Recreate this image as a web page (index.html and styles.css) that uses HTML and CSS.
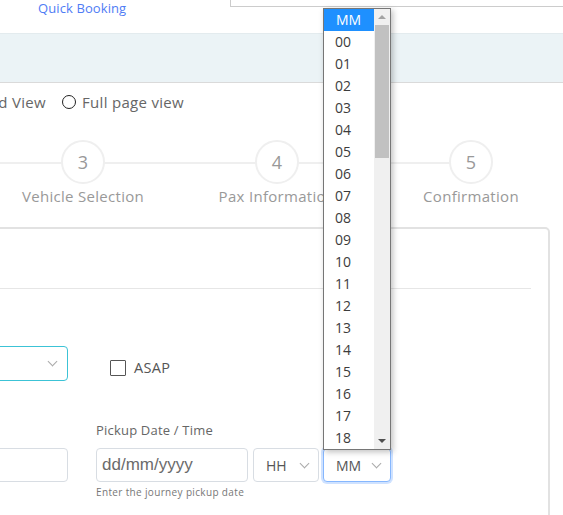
FILE: index.html
```html
<!DOCTYPE html>
<html lang="en">
<head>
  <meta charset="UTF-8" />
  <meta name="viewport" content="width=device-width, initial-scale=1.0"/>
  <title>Quick Booking</title>
  <link rel="stylesheet" href="styles.css">
</head>
<body>

  <!-- Top bar -->
  <div class="top-bar">
    <a href="#" class="quick-link">Quick Booking</a>
    <div class="search-box"></div>
  </div>

  <!-- Info band -->
  <div class="band"></div>

  <!-- View switch -->
  <div class="view-row">
    <label class="view-option first">Standard View</label>
    <label class="view-option"><span class="radio"></span>Full page view</label>
  </div>

  <!-- Steps -->
  <div class="stepper">
    <div class="step"><div class="step-circle">1</div><div class="step-label">Journey Details</div></div>
    <div class="step"><div class="step-circle">2</div><div class="step-label">Extras</div></div>
    <div class="step"><div class="step-circle">3</div><div class="step-label">Vehicle Selection</div></div>
    <div class="step"><div class="step-circle">4</div><div class="step-label">Pax Information</div></div>
    <div class="step"><div class="step-circle">5</div><div class="step-label">Confirmation</div></div>
  </div>

  <!-- Booking card -->
  <div class="card">
    <div class="card-header"></div>

    <div class="form-row first-row">
      <div class="col-left">
        <div class="select teal"><span></span><i class="chev"></i></div>
      </div>
      <div class="col-right">
        <label class="check"><span class="box"></span>ASAP</label>
      </div>
    </div>

    <div class="form-row second-row">
      <div class="col-left">
        <div class="field-label">&nbsp;</div>
        <div class="input"></div>
      </div>
      <div class="col-right">
        <div class="field-label">Pickup Date / Time</div>
        <div class="date-time">
          <div class="input date">dd/mm/yyyy</div>
          <div class="select hh"><span>HH</span><i class="chev"></i></div>
          <div class="select mm focus"><span>MM</span><i class="chev"></i></div>
        </div>
        <div class="help">Enter the journey pickup date</div>
      </div>
    </div>
  </div>

  <!-- Open minutes dropdown -->
  <div class="dropdown">
    <div class="options">
      <div class="opt selected">MM</div>
      <div class="opt">00</div>
      <div class="opt">01</div>
      <div class="opt">02</div>
      <div class="opt">03</div>
      <div class="opt">04</div>
      <div class="opt">05</div>
      <div class="opt">06</div>
      <div class="opt">07</div>
      <div class="opt">08</div>
      <div class="opt">09</div>
      <div class="opt">10</div>
      <div class="opt">11</div>
      <div class="opt">12</div>
      <div class="opt">13</div>
      <div class="opt">14</div>
      <div class="opt">15</div>
      <div class="opt">16</div>
      <div class="opt">17</div>
      <div class="opt">18</div>
    </div>
    <div class="scrollbar">
      <span class="arrow up"></span>
      <div class="track"><div class="thumb"></div></div>
      <span class="arrow down"></span>
    </div>
  </div>

</body>
</html>
```

FILE: styles.css
```css
* {
  margin: 0;
  padding: 0;
  box-sizing: border-box;
  font-family: 'Open Sans', 'DejaVu Sans', sans-serif;
}

body {
  width: 563px;
  height: 515px;
  overflow: hidden;
  position: relative;
  background: white;
  color: #666;
}

/* Top bar */
.top-bar {
  display: flex;
  height: 33px;
}

.quick-link {
  margin-left: 38px;
  margin-top: -2px;
  font-size: 13px;
  line-height: 20px;
  letter-spacing: 0.1px;
  color: #4f7cf5;
  text-decoration: none;
}

.search-box {
  margin-left: auto;
  width: 333px;
  height: 7px;
  border-left: 1px solid #ccc;
  border-bottom: 1px solid #ccc;
}

.band {
  height: 50px;
  background: #ebf3f6;
  border-top: 1px solid #e3ebee;
  border-bottom: 1px solid #dadada;
}

/* View switch */
.view-row {
  display: flex;
  align-items: center;
  margin-top: 9px;
  height: 20px;
  font-size: 15px;
  letter-spacing: 0.3px;
  color: #666;
}

.view-option {
  display: flex;
  align-items: center;
  white-space: nowrap;
}

.view-option.first {
  width: 46px;
  justify-content: flex-end;
  margin-right: 16px;
}

.radio {
  width: 14px;
  height: 14px;
  border: 1.5px solid #222;
  border-radius: 50%;
  margin-right: 6px;
}

/* Stepper */
.stepper {
  display: flex;
  position: relative;
  margin-top: 28px;
  margin-left: -402px;
}

.stepper::before {
  content: '';
  position: absolute;
  top: 22px;
  left: 97px;
  right: 97px;
  height: 2px;
  background: #efefef;
}

.step {
  width: 194px;
  flex-shrink: 0;
  display: flex;
  flex-direction: column;
  align-items: center;
  position: relative;
}

.step-circle {
  width: 44px;
  height: 44px;
  border: 2px solid #efefef;
  border-radius: 50%;
  background: white;
  display: flex;
  align-items: center;
  justify-content: center;
  font-size: 18px;
  color: #999;
}

.step-label {
  margin-top: 2px;
  font-size: 15px;
  line-height: 20px;
  letter-spacing: 0.3px;
  color: #999;
  white-space: nowrap;
}

/* Card */
.card {
  margin-top: 21px;
  margin-left: -20px;
  width: 570px;
  height: 300px;
  border: 2px solid #e2e2e2;
  border-radius: 5px;
  padding-right: 17px;
}

.card-header {
  height: 60px;
  border-bottom: 1px solid #e6e6e6;
}

.form-row {
  display: flex;
  gap: 28px;
  margin-left: -100px;
}

.col-left {
  width: 186px;
  flex-shrink: 0;
}

.first-row {
  margin-top: 57px;
  align-items: flex-start;
}

.second-row {
  margin-top: 40px;
}

.select {
  height: 35px;
  border: 1px solid #d8dde3;
  border-radius: 4px;
  display: flex;
  align-items: center;
  justify-content: space-between;
  padding: 0 10px 0 12px;
  font-size: 14px;
  color: #555;
  background: white;
}

.select.teal {
  border-color: #3cc3d6;
  padding-right: 11px;
}

.chev {
  width: 7px;
  height: 7px;
  border-right: 1px solid #aaa;
  border-bottom: 1px solid #aaa;
  transform: rotate(45deg);
  margin-top: -4px;
}

.check {
  display: flex;
  align-items: center;
  margin-top: 12px;
  margin-left: 14px;
  font-size: 14.5px;
  letter-spacing: 0.3px;
  color: #555;
}

.check .box {
  width: 16px;
  height: 16px;
  border: 1.5px solid #555;
  border-radius: 1px;
  margin-right: 8px;
}

.field-label {
  font-size: 13px;
  line-height: 18px;
  letter-spacing: 0.2px;
  color: #666;
  margin-bottom: 9px;
}

.input {
  height: 34px;
  border: 1px solid #d8dde3;
  border-radius: 4px;
  background: white;
}

.date-time {
  display: flex;
  gap: 5px;
}

.input.date {
  width: 152px;
  padding-left: 5px;
  font-family: 'Liberation Sans', Arial, sans-serif;
  font-size: 17px;
  line-height: 32px;
  color: #6b6b6b;
}

.select.hh {
  width: 66px;
  height: 34px;
}

.select.mm {
  width: 68px;
  height: 34px;
  margin-left: -1px;
}

.select.focus {
  border-color: #86b7fe;
  box-shadow: 0 0 0 2px rgba(13, 110, 253, 0.2);
}

.help {
  margin-top: 3px;
  font-size: 10px;
  letter-spacing: 0.35px;
  color: #777;
}

/* Dropdown list */
.dropdown {
  position: absolute;
  left: 323px;
  top: 8px;
  width: 68px;
  height: 442px;
  border: 1px solid #767676;
  background: white;
  display: flex;
  box-shadow: 2px 2px 6px rgba(0, 0, 0, 0.25);
  overflow: hidden;
}

.options {
  flex: 1;
}

.opt {
  height: 22px;
  line-height: 22px;
  padding-left: 11px;
  font-size: 14px;
  color: #3c3c3c;
}

.opt.selected {
  background: #1e90ff;
  color: white;
  padding-left: 12px;
}

.scrollbar {
  width: 16px;
  background: #f0f0f0;
  display: flex;
  flex-direction: column;
  align-items: center;
}

.track {
  flex: 1;
  width: 100%;
  padding: 0 1px;
}

.thumb {
  height: 133px;
  background: #c1c1c1;
}

.arrow {
  width: 0;
  height: 0;
  border-left: 4px solid transparent;
  border-right: 4px solid transparent;
  margin: 6px 0;
}

.arrow.up {
  border-bottom: 4px solid #a3a3a3;
}

.arrow.down {
  border-top: 4px solid #505050;
}
```
